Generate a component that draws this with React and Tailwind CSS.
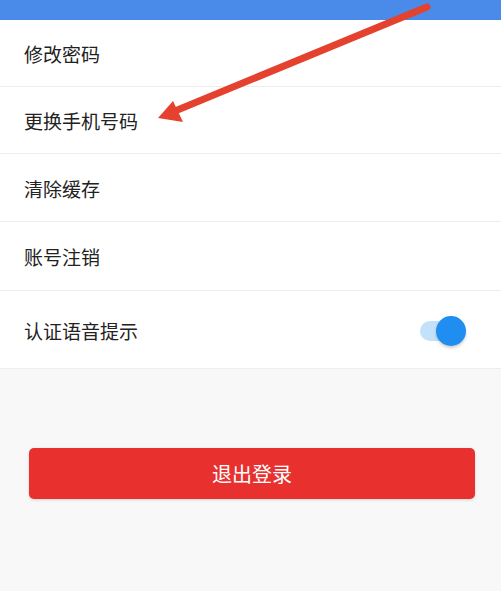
import React from 'react';

const rows = [
  { label: '修改密码', h: 'h-[67px]' },
  { label: '更换手机号码', h: 'h-[67px]' },
  { label: '清除缓存', h: 'h-[68px]' },
  { label: '账号注销', h: 'h-[69px]' },
];

const Toggle = () => (
  <div className="relative w-[48px] h-[32px] flex items-center">
    <div className="absolute left-[2px] w-[34px] h-[20px] rounded-full bg-[#c4e1fb]" />
    <div className="absolute right-0 w-[30px] h-[30px] rounded-full bg-[#1f8ef0] shadow-[0_2px_3px_rgba(0,0,0,0.2)]" />
  </div>
);

const App = () => {
  return (
    <div
      className="relative w-[501px] h-[591px] bg-[#f8f8f8] overflow-hidden"
      style={{ fontFamily: '"Noto Sans CJK SC", "Noto Sans", sans-serif' }}
    >
      {/* top bar */}
      <div className="h-[20px] bg-[#4a8ae8]" />

      {/* settings list */}
      <div className="bg-white">
        {rows.map((row) => (
          <div
            key={row.label}
            className={`${row.h} flex items-center pt-[3px] px-[24px] border-b border-[#ededed] text-[19px] text-[#222]`}
          >
            {row.label}
          </div>
        ))}
        <div className="h-[78px] flex items-center justify-between pt-[3px] pl-[24px] pr-[35px] border-b border-[#ededed] text-[19px] text-[#222]">
          <span>认证语音提示</span>
          <Toggle />
        </div>
      </div>

      {/* logout */}
      <div className="pt-[79px] pl-[29px] pr-[26px]">
        <button className="w-full h-[51px] rounded-[5px] bg-[#e8302e] text-white text-[20px] shadow-[0_1px_3px_rgba(0,0,0,0.15)]">
          退出登录
        </button>
      </div>

      {/* red annotation arrow */}
      <svg className="absolute inset-0 pointer-events-none" width="501" height="591">
        <line x1="427" y1="7" x2="175" y2="111" stroke="#e5412f" strokeWidth="7" strokeLinecap="round" />
        <polygon points="158,118 173,101 183,122" fill="#e5412f" />
      </svg>
    </div>
  );
};

export default App;
